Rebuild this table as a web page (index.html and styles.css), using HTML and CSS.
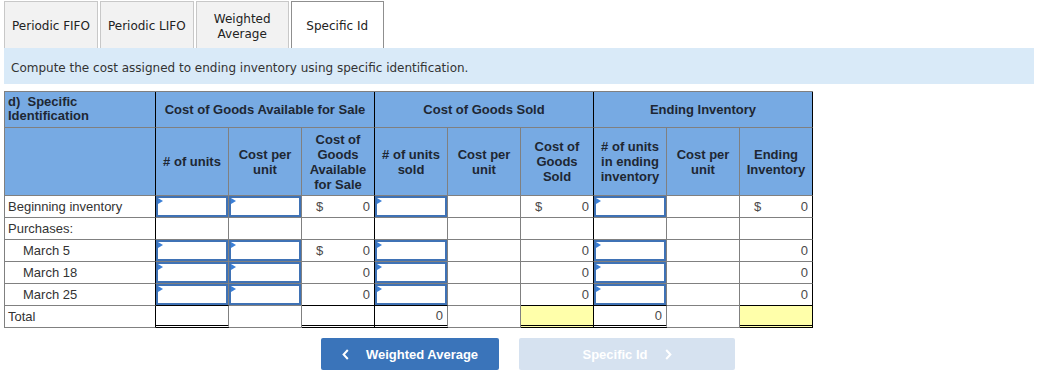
FILE: index.html
```html
<!DOCTYPE html>
<html lang="en">
<head>
<meta charset="utf-8">
<title>Specific Identification</title>
<link rel="stylesheet" href="styles.css">
</head>
<body>
<div class="page">
  <div class="tabs">
    <div class="tab">Periodic FIFO</div>
    <div class="tab">Periodic LIFO</div>
    <div class="tab">Weighted<br>Average</div>
    <div class="tab active">Specific Id</div>
  </div>
  <div class="banner">Compute the cost assigned to ending inventory using specific identification.</div>

  <div class="sheet">
    <!-- header row 1 -->
    <div class="hd lbl br">d)&nbsp; Specific<br>Identification</div>
    <div class="hd grp br">Cost of Goods Available for Sale</div>
    <div class="hd grp br">Cost of Goods Sold</div>
    <div class="hd grp br">Ending Inventory</div>
    <!-- header row 2 -->
    <div class="hd br"></div>
    <div class="hd sub"># of units</div>
    <div class="hd sub">Cost per<br>unit</div>
    <div class="hd sub br">Cost of<br>Goods<br>Available<br>for Sale</div>
    <div class="hd sub"># of units<br>sold</div>
    <div class="hd sub">Cost per<br>unit</div>
    <div class="hd sub br">Cost of<br>Goods<br>Sold</div>
    <div class="hd sub"># of units<br>in ending<br>inventory</div>
    <div class="hd sub">Cost per<br>unit</div>
    <div class="hd sub br">Ending<br>Inventory</div>

    <!-- Beginning inventory -->
    <div class="lab br">Beginning inventory</div>
    <div><div class="inp"></div></div>
    <div><div class="inp"></div></div>
    <div class="val br"><span>$</span><span>0</span></div>
    <div><div class="inp"></div></div>
    <div></div>
    <div class="val br"><span>$</span><span>0</span></div>
    <div><div class="inp"></div></div>
    <div></div>
    <div class="val br"><span>$</span><span>0</span></div>

    <!-- Purchases -->
    <div class="lab br">Purchases:</div>
    <div></div>
    <div></div>
    <div class="br"></div>
    <div></div>
    <div></div>
    <div class="br"></div>
    <div></div>
    <div></div>
    <div class="br"></div>

    <!-- March 5 -->
    <div class="lab ind br">March 5</div>
    <div><div class="inp"></div></div>
    <div><div class="inp"></div></div>
    <div class="val br"><span>$</span><span>0</span></div>
    <div><div class="inp"></div></div>
    <div></div>
    <div class="val br"><span></span><span>0</span></div>
    <div><div class="inp"></div></div>
    <div></div>
    <div class="val br"><span></span><span>0</span></div>

    <!-- March 18 -->
    <div class="lab ind br">March 18</div>
    <div><div class="inp"></div></div>
    <div><div class="inp"></div></div>
    <div class="val br"><span></span><span>0</span></div>
    <div><div class="inp"></div></div>
    <div></div>
    <div class="val br"><span></span><span>0</span></div>
    <div><div class="inp"></div></div>
    <div></div>
    <div class="val br"><span></span><span>0</span></div>

    <!-- March 25 -->
    <div class="lab ind br">March 25</div>
    <div class="sum"><div class="inp"></div></div>
    <div><div class="inp"></div></div>
    <div class="val br sum"><span></span><span>0</span></div>
    <div class="sum"><div class="inp"></div></div>
    <div></div>
    <div class="val br sum"><span></span><span>0</span></div>
    <div class="sum"><div class="inp"></div></div>
    <div></div>
    <div class="val br sum"><span></span><span>0</span></div>

    <!-- Total -->
    <div class="lab br">Total</div>
    <div class="tot"></div>
    <div></div>
    <div class="tot br"></div>
    <div class="val tot"><span></span><span>0</span></div>
    <div></div>
    <div class="tot hl br"></div>
    <div class="val tot"><span></span><span>0</span></div>
    <div></div>
    <div class="tot hl br"></div>
  </div>

  <div class="nav">
    <div class="btn prev">
      <svg class="chev" width="7" height="11" viewBox="0 0 7 11" aria-hidden="true"><path d="M5.8 1 L1.6 5.5 L5.8 10" fill="none" stroke="#fff" stroke-width="2"/></svg>
      <span>Weighted Average</span>
    </div>
    <div class="btn next">
      <span>Specific Id</span>
      <svg class="chev" width="7" height="11" viewBox="0 0 7 11" aria-hidden="true"><path d="M1.2 1 L5.4 5.5 L1.2 10" fill="none" stroke="#fff" stroke-width="2"/></svg>
    </div>
  </div>
</div>
</body>
</html>
```
FILE: styles.css
```css
body {
  margin: 0;
  background: #fff;
  color: #333;
  font-family: "Liberation Sans", Arial, sans-serif;
}

.page {
  padding: 1px 8px 0 4px;
}

/* ---------- tabs ---------- */
.tabs {
  display: flex;
  gap: 2px;
  height: 47px;
}

.tab {
  display: flex;
  align-items: center;
  justify-content: center;
  min-width: 77px;
  padding: 3px 7px 0;
  background: #f2f2f2;
  border: 1px solid #c8c8c8;
  border-bottom: none;
  color: #222;
  font-family: "DejaVu Sans", Verdana, sans-serif;
  font-size: 12px;
  line-height: 15px;
  text-align: center;
}

.tab.active {
  background: #fff;
  border-color: #8f8f8f;
}

/* ---------- banner ---------- */
.banner {
  display: flex;
  align-items: center;
  box-sizing: border-box;
  height: 36px;
  padding: 3px 0 0 7px;
  background: #d9eaf8;
  color: #333;
  font-family: "DejaVu Sans", Verdana, sans-serif;
  font-size: 12px;
}

/* ---------- worksheet ---------- */
.sheet {
  display: grid;
  grid-template-columns: 151px repeat(9, 73px);
  grid-template-rows: 36px 68px repeat(6, 22px);
  width: max-content;
  margin-top: 7px;
  border-top: 1px solid #808080;
  border-left: 1px solid #808080;
  font-size: 13px;
}

.sheet > div {
  box-sizing: border-box;
  border-right: 1px solid #808080;
  border-bottom: 1px solid #808080;
  background: #fff;
}

.sheet > .br {
  border-right-color: #000;
}

.sheet > .hd {
  background: #77aae3;
  color: #1e2733;
  font-weight: bold;
  font-size: 13px;
}

.hd.lbl {
  padding: 3px 3px 0;
  line-height: 14px;
}

.hd.grp {
  grid-column: span 3;
  display: flex;
  align-items: center;
  justify-content: center;
}

.hd.sub {
  display: flex;
  align-items: center;
  justify-content: center;
  text-align: center;
  line-height: 15px;
}

.lab {
  display: flex;
  align-items: center;
  padding-left: 3px;
  color: #333;
  white-space: nowrap;
}

.lab.ind {
  padding-left: 18px;
}

.val {
  display: flex;
  align-items: center;
  justify-content: space-between;
  padding: 0 4px 0 14px;
  color: #4a4a4a;
}

.sheet > .sum {
  border-bottom-color: #000;
}

.sheet > .tot {
  border-bottom: 3px double #000;
}

.sheet > .hl {
  background: #ffffaa;
}

.inp {
  position: relative;
  box-sizing: border-box;
  height: 100%;
  border: 2px solid #3f72b5;
  background: #fff;
}

.inp::before {
  content: "";
  position: absolute;
  top: 0;
  left: 0;
  border-left: 5px solid #3b7fd6;
  border-top: 3px solid transparent;
  border-bottom: 3px solid transparent;
}

/* ---------- navigation ---------- */
.nav {
  display: flex;
  gap: 20px;
  margin-top: 10px;
  padding-left: 317px;
}

.btn {
  display: flex;
  align-items: center;
  justify-content: center;
  gap: 17px;
  height: 32px;
  border-radius: 2px;
  color: #fff;
  font-weight: bold;
  font-size: 13px;
}

.btn.prev {
  width: 178px;
  background: #3a74ba;
}

.btn.next {
  width: 216px;
  background: #d6e2f0;
}

.chev {
  display: block;
}
```
